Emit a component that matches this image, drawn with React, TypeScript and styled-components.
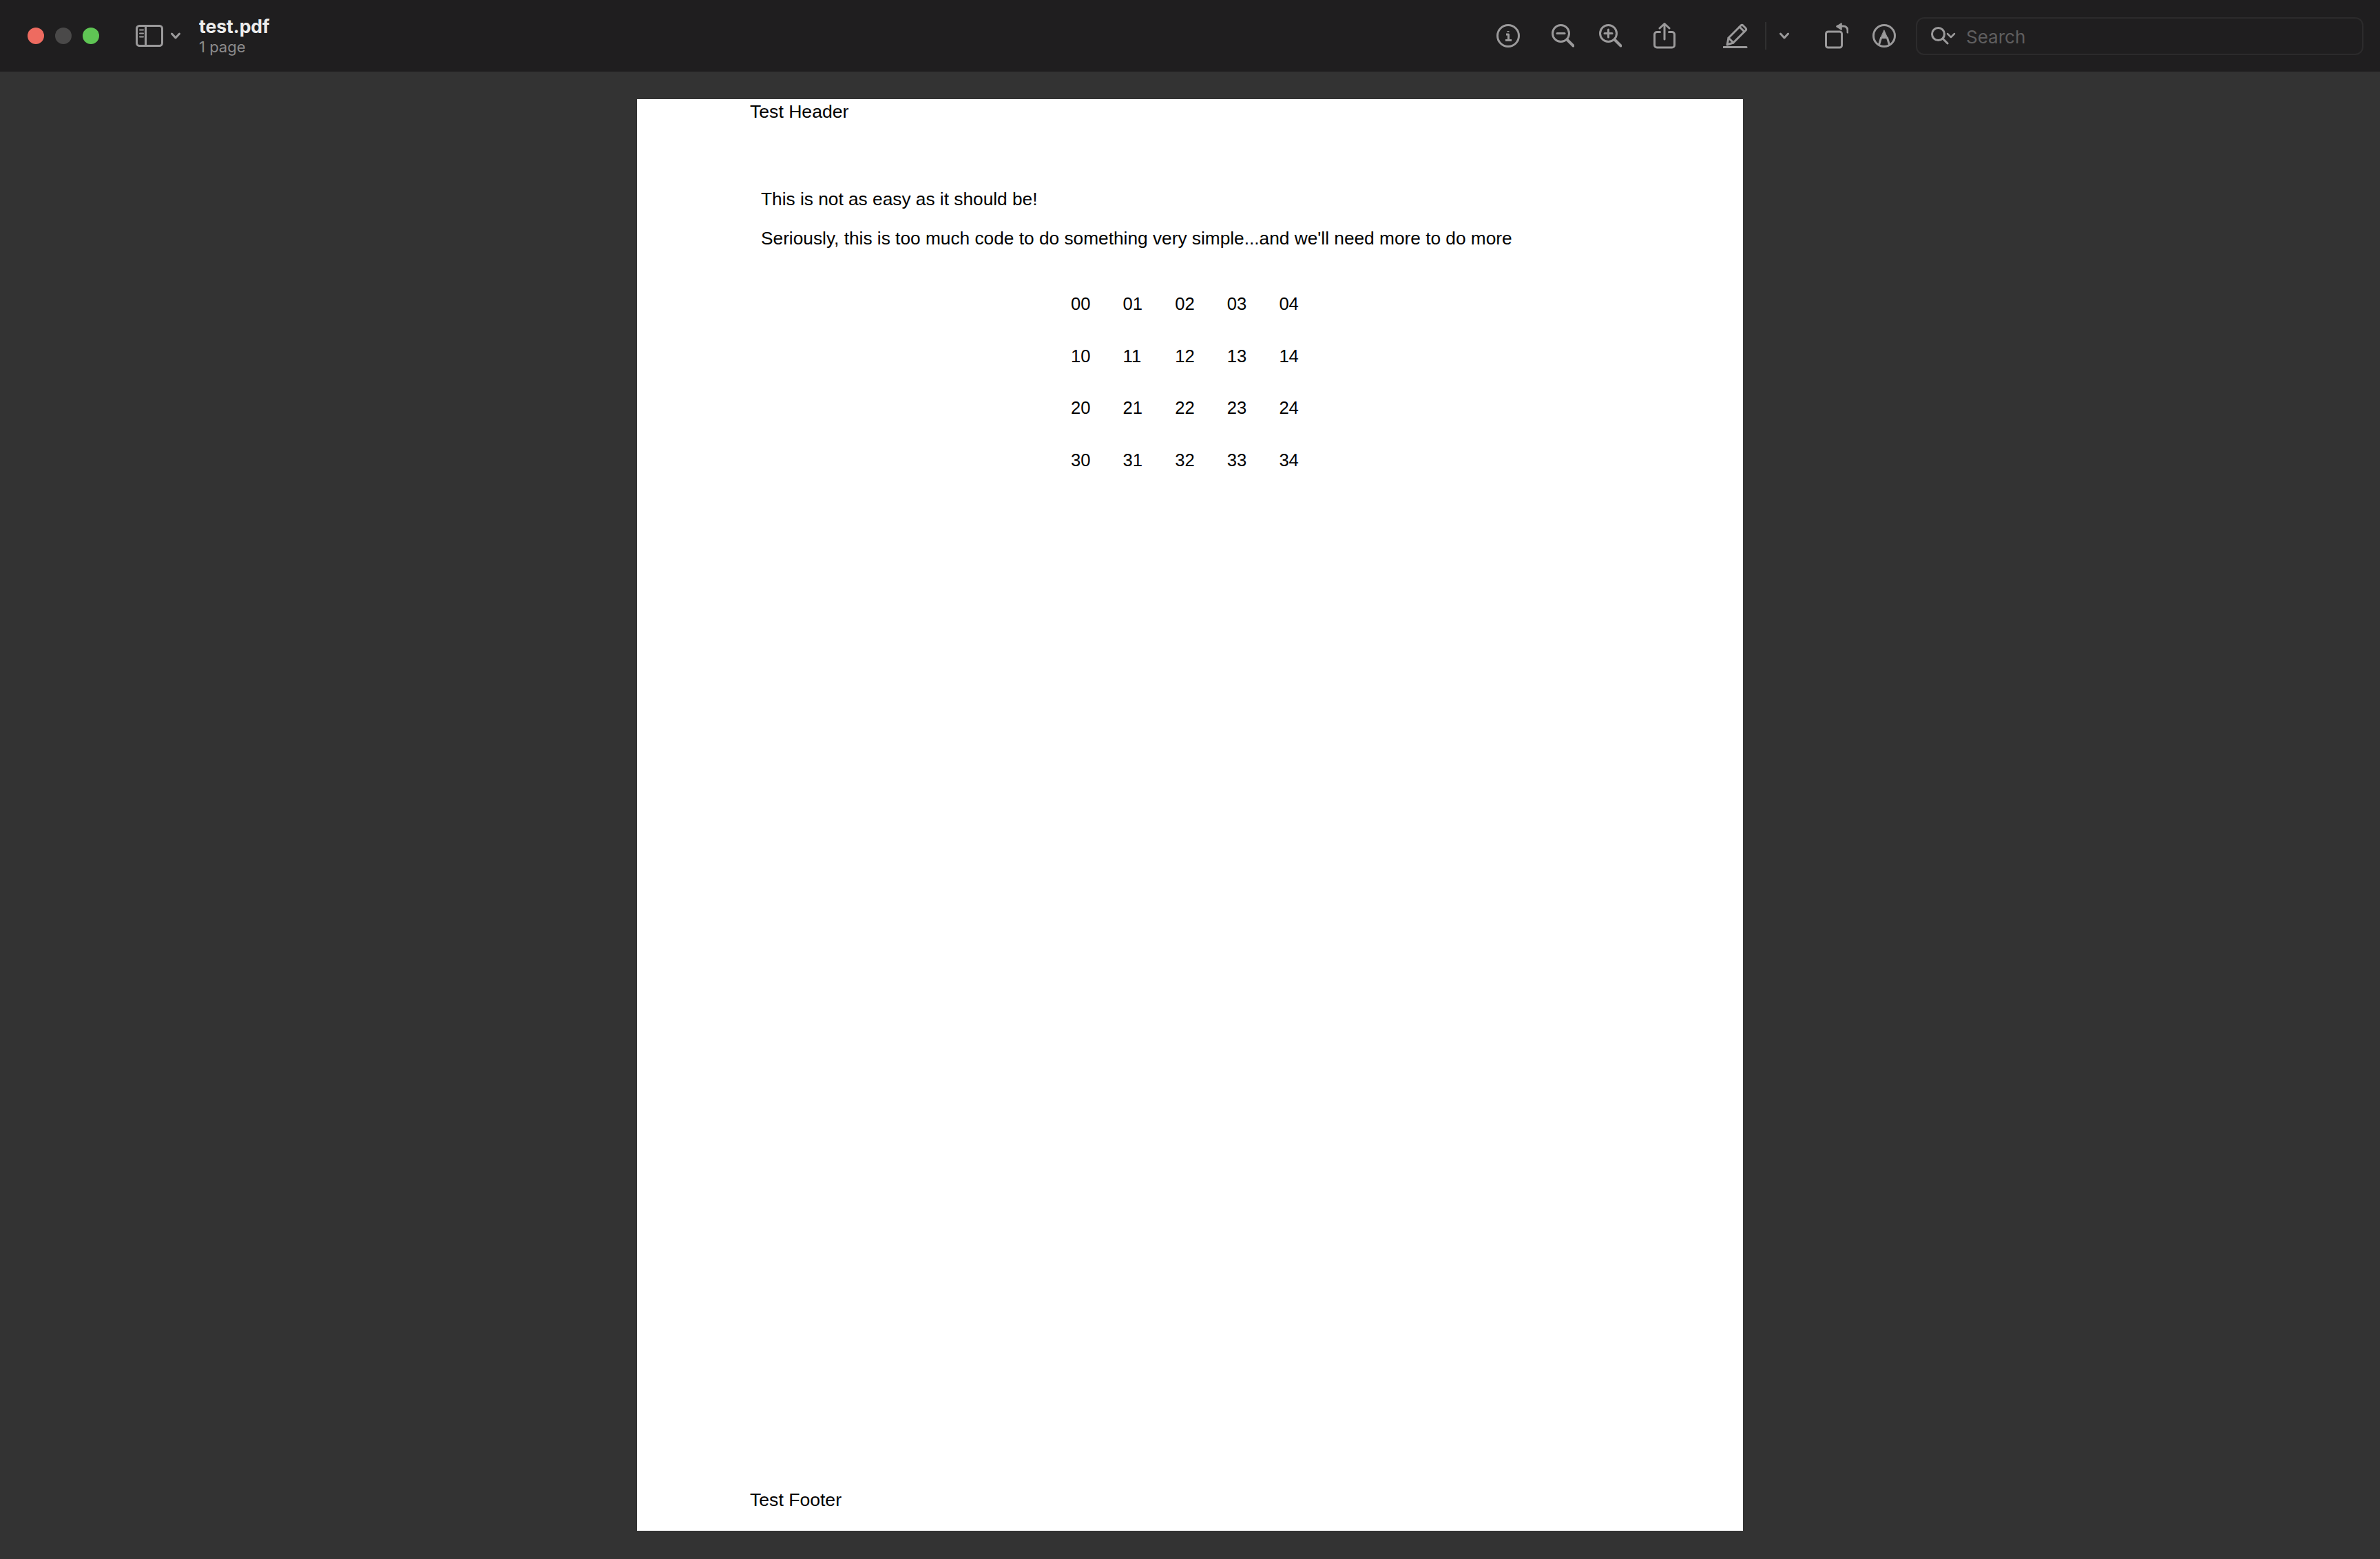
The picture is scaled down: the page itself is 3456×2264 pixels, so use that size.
import React from 'react';
import styled, { createGlobalStyle } from 'styled-components';

const GlobalStyle = createGlobalStyle`
  html, body {
    margin: 0;
    padding: 0;
    background: #333333;
  }
  body {
    width: 3456px;
    height: 2264px;
    overflow: hidden;
  }
`;

// --- Toolbar ---

const Window = styled.div`
  display: flex;
  flex-direction: column;
  width: 3456px;
  height: 2264px;
`;

const Toolbar = styled.header`
  display: flex;
  align-items: center;
  flex: none;
  height: 104px;
  padding-left: 40px;
  padding-right: 24px;
  box-sizing: border-box;
  background: #1f1e1f;
`;

const Lights = styled.div`
  display: flex;
  gap: 16px;
  margin-right: 53px;
`;

const Light = styled.span<{ $color: string }>`
  width: 24px;
  height: 24px;
  border-radius: 50%;
  background: ${p => p.$color};
`;

const Title = styled.div`
  display: flex;
  flex-direction: column;
  margin-left: 27px;
  font-family: Inter, "Liberation Sans", sans-serif;
`;

const FileName = styled.div`
  font-size: 26.5px;
  line-height: 30px;
  font-weight: 700;
  color: #ececec;
`;

const PageCount = styled.div`
  margin-top: 2px;
  font-size: 22px;
  line-height: 26px;
  color: #8c8b8c;
`;

const Tools = styled.div`
  display: flex;
  align-items: center;
  margin-left: auto;
`;

const Icon = styled.svg<{ $after?: number }>`
  display: block;
  flex: none;
  margin-right: ${p => p.$after ?? 0}px;
  fill: none;
  stroke: #9b9a9b;
  stroke-width: 3;
  stroke-linecap: round;
  stroke-linejoin: round;
`;

const Divider = styled.span`
  width: 2px;
  height: 40px;
  margin: 0 19px 0 25px;
  background: #303030;
`;

const SearchBox = styled.div`
  display: flex;
  align-items: center;
  width: 650px;
  height: 55px;
  padding-left: 20px;
  box-sizing: border-box;
  border: 2px solid #2c2b2c;
  border-radius: 12px;
  font-family: Inter, "Liberation Sans", sans-serif;
  font-size: 26px;
  color: #5f5e5f;
`;

const SearchHint = styled.span`
  padding-top: 3px;
`;

// --- Document ---

const Stage = styled.main`
  display: flex;
  justify-content: center;
  flex: 1;
  padding-top: 40px;
  background: #333333;
`;

const Sheet = styled.article`
  display: flex;
  flex-direction: column;
  width: 1606px;
  height: 2079px;
  padding: 1px 0 0 164px;
  box-sizing: border-box;
  background: #ffffff;
  color: #000000;
  font-family: "Liberation Sans", Arial, sans-serif;
  font-size: 26.6px;
`;

const RunningLine = styled.div`
  height: 34px;
  line-height: 34px;
`;

const Intro = styled.div`
  display: flex;
  flex-direction: column;
  gap: 23px;
  margin-top: 93px;
  padding-left: 16px;
  font-size: 26.28px;
  line-height: 34px;
`;

const NumberGrid = styled.div`
  display: grid;
  grid-template-columns: repeat(5, 75.6px);
  grid-auto-rows: 75.6px;
  align-items: center;
  margin: 41px 0 0 466px;
  font-size: 25.6px;
`;

const Footer = styled(RunningLine)`
  margin-top: auto;
  margin-bottom: 28px;
`;

const rows = [0, 1, 2, 3];
const cols = [0, 1, 2, 3, 4];

const App: React.FC = () => {
  return (
    <Window>
      <GlobalStyle />
      <Toolbar>
        <Lights>
          <Light $color="#ee6b60" />
          <Light $color="#4a4949" />
          <Light $color="#5fc554" />
        </Lights>

        {/* Sidebar toggle */}
        <Icon width="40" height="32" viewBox="0 0 40 32" $after={11}>
          <rect x="1.5" y="1.5" width="37" height="29" rx="4" />
          <path d="M14.5 2v28" />
          <path d="M6 7.5h5M6 12.5h5M6 17.5h5" strokeWidth="2" />
        </Icon>
        <Icon width="14" height="10" viewBox="0 0 14 10">
          <path d="M1.5 2l5.5 6 5.5-6" />
        </Icon>

        <Title>
          <FileName>test.pdf</FileName>
          <PageCount>1 page</PageCount>
        </Title>

        <Tools>
          {/* Info */}
          <Icon width="34" height="34" viewBox="0 0 34 34" $after={46}>
            <circle cx="17" cy="17" r="15.5" />
            <path d="M14 15h3.5v8M13 23.5h9M17 10v1.5" strokeLinecap="butt" />
          </Icon>
          {/* Zoom out */}
          <Icon width="33" height="34" viewBox="0 0 33 34" $after={36}>
            <circle cx="13.5" cy="13.5" r="12" />
            <path d="M8 13.5h11" />
            <path d="M22.5 22.5l9 9" strokeWidth="4" />
          </Icon>
          {/* Zoom in */}
          <Icon width="33" height="34" viewBox="0 0 33 34" $after={46}>
            <circle cx="13.5" cy="13.5" r="12" />
            <path d="M8 13.5h11M13.5 8v11" />
            <path d="M22.5 22.5l9 9" strokeWidth="4" />
          </Icon>
          {/* Share */}
          <Icon width="32" height="38" viewBox="0 0 32 38" $after={69}>
            <path d="M9.5 13.5H5a3.5 3.5 0 0 0-3.5 3.5v15.5A3.5 3.5 0 0 0 5 36h22a3.5 3.5 0 0 0 3.5-3.5V17a3.5 3.5 0 0 0-3.5-3.5h-4.5" />
            <path d="M16 24V2M9 8l7-6.5L23 8" />
          </Icon>
          {/* Highlight pencil */}
          <Icon width="36" height="36" viewBox="0 0 36 36">
            <path d="M8 21L26 3a2 2 0 0 1 3 0l4 4a2 2 0 0 1 0 3L15 28l-9 3z" />
            <path d="M8 21l7 7M24 5l7 7" />
            <path d="M1 34.5h33" />
          </Icon>
          <Divider />
          <Icon width="14" height="10" viewBox="0 0 14 10" $after={52}>
            <path d="M1.5 2l5.5 6 5.5-6" />
          </Icon>
          {/* Rotate */}
          <Icon width="34" height="38" viewBox="0 0 34 38" $after={35}>
            <rect x="1.5" y="13" width="23" height="23" rx="3" />
            <path d="M33 14v-3a6 6 0 0 0-6-6h-9" />
            <path d="M24 1l-7 4.5 7 4.5z" fill="#9b9a9b" strokeWidth="1.5" />
          </Icon>
          {/* Markup */}
          <Icon width="34" height="34" viewBox="0 0 34 34" $after={29}>
            <circle cx="17" cy="17" r="15.5" />
            <path d="M9.5 30l3-10M24.5 30l-3-10" />
            <path d="M12 20.5h10L17 9z" fill="#9b9a9b" strokeWidth="1" />
          </Icon>
          <SearchBox>
            <Icon width="36" height="26" viewBox="0 0 36 26" $after={15}>
              <circle cx="10.5" cy="10.5" r="9" />
              <path d="M17 17l7 7" />
              <path d="M24 10l5 5 5-5" strokeWidth="2.5" />
            </Icon>
            <SearchHint>Search</SearchHint>
          </SearchBox>
        </Tools>
      </Toolbar>

      <Stage>
        <Sheet>
          <RunningLine>Test Header</RunningLine>
          <Intro>
            <div>This is not as easy as it should be!</div>
            <div>Seriously, this is too much code to do something very simple...and we'll need more to do more</div>
          </Intro>
          <NumberGrid>
            {rows.flatMap(r =>
              cols.map(c => <div key={`${r}${c}`}>{`${r}${c}`}</div>)
            )}
          </NumberGrid>
          <Footer>Test Footer</Footer>
        </Sheet>
      </Stage>
    </Window>
  );
};

export default App;
